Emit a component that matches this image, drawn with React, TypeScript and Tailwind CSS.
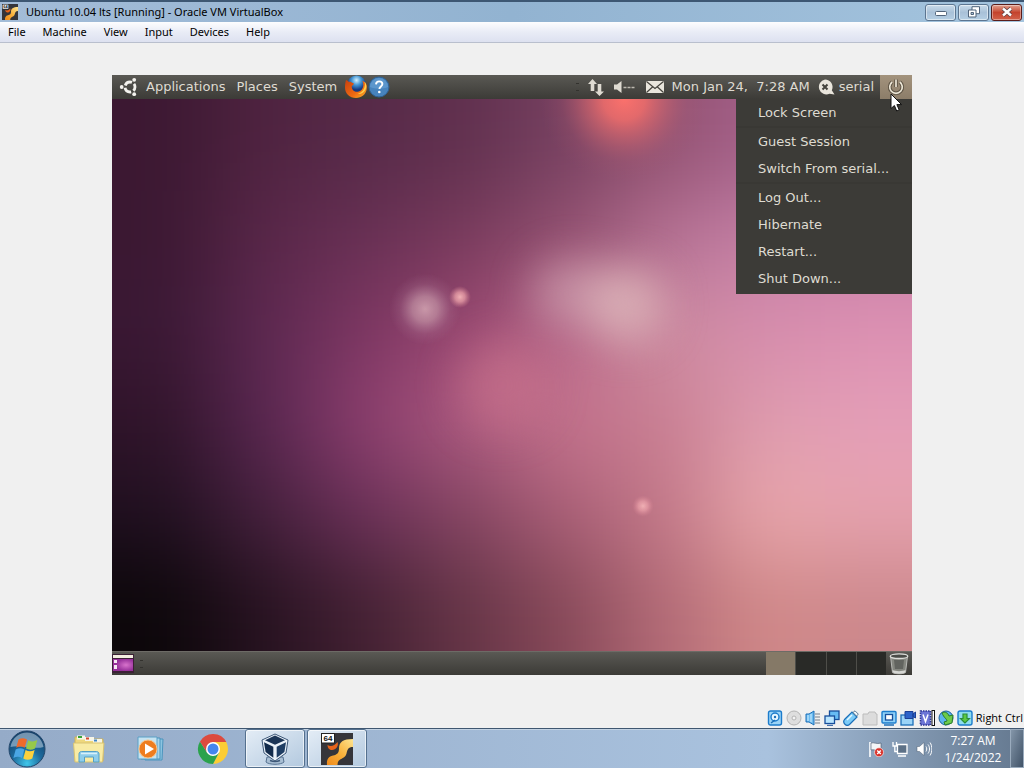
/**
 * VirtualBox window on a Windows 7 desktop, running an Ubuntu 10.04 guest
 * with the session menu open.
 */
import type { ReactNode } from "react";

/* ─────────────── Data ──────────────── */
const MENUS = ["File", "Machine", "View", "Input", "Devices", "Help"];

const SESSION_MENU: string[][] = [
    ["Lock Screen"],
    ["Guest Session", "Switch From serial..."],
    ["Log Out...", "Hibernate", "Restart...", "Shut Down..."],
];

//Wallpaper base colours, one per 100px cell, blurred together
const MESH = [
    ["#3c1832", "#4f2340", "#562a48", "#60304e", "#764060", "#925270", "#a4608a", "#b06898"],
    ["#3b1832", "#582648", "#683054", "#783a5c", "#925070", "#b47092", "#c480a6", "#c880a8"],
    ["#3a1834", "#5c2850", "#7c3662", "#984670", "#b8688a", "#cc8ca0", "#d68cac", "#dc90b2"],
    ["#30142a", "#582650", "#8c3e6e", "#ac5a80", "#c4728c", "#c87e92", "#de9cae", "#e49eb8"],
    ["#201020", "#44203c", "#6a3058", "#844462", "#a85e76", "#c27888", "#e8a6aa", "#e6a2ae"],
    ["#0c070a", "#261220", "#422032", "#643446", "#864858", "#b26a76", "#d08888", "#cc888c"],
];

/* ─────────────── Wallpaper ──────────────── */
function Wallpaper() {
    const last = MESH[0].length - 1;
    const cells: ReactNode[] = [];
    //One extra ring of cells keeps the blur from fading at the edges
    for (let r = -1; r <= MESH.length; r++) {
        for (let c = -1; c <= last + 1; c++) {
            const row = MESH[Math.min(Math.max(r, 0), MESH.length - 1)];
            cells.push(
                <rect
                    key={`${r}-${c}`}
                    x={c * 100 - (c < 0 ? 60 : 0)}
                    y={r * 92 - (r < 0 ? 60 : 0)}
                    width={c < 0 || c > last ? 161 : 101}
                    height={r < 0 || r === MESH.length ? 153 : 93}
                    fill={row[Math.min(Math.max(c, 0), last)]}
                />
            );
        }
    }
    return (
        <svg viewBox="0 0 800 552" preserveAspectRatio="none" className="block h-[552px] w-full" aria-hidden="true">
            <defs>
                <filter id="mesh" x="-170" y="-160" width="1140" height="880" filterUnits="userSpaceOnUse" colorInterpolationFilters="sRGB">
                    <feGaussianBlur stdDeviation="42" />
                </filter>
                <filter id="soft" x="-50%" y="-50%" width="200%" height="200%" colorInterpolationFilters="sRGB">
                    <feGaussianBlur stdDeviation="20" />
                </filter>
                <radialGradient id="red">
                    <stop offset="0" stopColor="#fb716c" />
                    <stop offset="0.25" stopColor="#f26e6b" stopOpacity="0.85" />
                    <stop offset="0.5" stopColor="#d8686e" stopOpacity="0.5" />
                    <stop offset="0.75" stopColor="#b85f70" stopOpacity="0.15" />
                    <stop offset="1" stopColor="#a05570" stopOpacity="0" />
                </radialGradient>
                <radialGradient id="pale">
                    <stop offset="0" stopColor="#cc9cac" stopOpacity="0.95" />
                    <stop offset="0.35" stopColor="#c494a6" stopOpacity="0.7" />
                    <stop offset="0.7" stopColor="#b884a0" stopOpacity="0.2" />
                    <stop offset="1" stopColor="#b07898" stopOpacity="0" />
                </radialGradient>
                <radialGradient id="spark">
                    <stop offset="0" stopColor="#f0b0b4" />
                    <stop offset="0.45" stopColor="#e49aa4" stopOpacity="0.8" />
                    <stop offset="1" stopColor="#d08090" stopOpacity="0" />
                </radialGradient>
            </defs>
            <g filter="url(#mesh)">{cells}</g>
            <circle cx="512" cy="0" r="84" fill="url(#red)" />
            <g filter="url(#soft)">
                <circle cx="390" cy="286" r="44" fill="#d27a90" opacity="0.45" />
                <ellipse cx="462" cy="194" rx="42" ry="34" fill="#cfa2b0" opacity="0.65" />
                <circle cx="514" cy="206" r="38" fill="#dfb8bc" opacity="0.8" />
            </g>
            <circle cx="313" cy="210" r="36" fill="url(#pale)" />
            <circle cx="348" cy="198" r="11" fill="url(#spark)" />
            <circle cx="531" cy="407" r="11" fill="url(#spark)" />
        </svg>
    );
}

/* ─────────────── Guest icons ──────────────── */
function UbuntuLogo() {
    return (
        <svg viewBox="0 0 20 20" className="size-5" aria-hidden="true">
            <circle cx="11" cy="10" r="5" fill="none" stroke="#f4f2ee" strokeWidth="2.800" strokeDasharray="8.070 2.400" strokeDashoffset="4.030" />
            <circle cx="2.700" cy="10" r="1.900" fill="#f4f2ee" />
            <circle cx="15.200" cy="2.800" r="1.900" fill="#f4f2ee" />
            <circle cx="15.200" cy="17.200" r="1.900" fill="#f4f2ee" />
        </svg>
    );
}

function FirefoxIcon() {
    return (
        <svg viewBox="0 0 24 24" className="size-6" aria-hidden="true">
            <defs>
                <radialGradient id="ffGlobe" cx="0.5" cy="0.25">
                    <stop offset="0" stopColor="#d4f0fc" />
                    <stop offset="0.5" stopColor="#4496d4" />
                    <stop offset="1" stopColor="#163a82" />
                </radialGradient>
                <linearGradient id="ffFox" x1="0" y1="0" x2="1" y2="1">
                    <stop offset="0" stopColor="#c8400f" />
                    <stop offset="0.6" stopColor="#ee6a12" />
                    <stop offset="1" stopColor="#f9b62a" />
                </linearGradient>
            </defs>
            <circle cx="12.500" cy="10" r="9.500" fill="url(#ffGlobe)" />
            <path d="M2 5c1 .2 2 1 3 2 1.200-.6 2.200-.3 3 .7 1.500.2 2 .8 1.500 1.700-.5 1-1.700 1-1.800 2.300.3 3.300 3 5.600 6.300 5 3.200-.6 5-3 5.300-6.300.1-1.800-.2-3.300-.9-4.700C22.500 7.500 23.300 10.500 22.800 13.500 22 19.500 17.500 23 12 23 5.500 23 1 18.500 1 12.500 1 10 1.400 7 2 5z" fill="url(#ffFox)" />
            <path d="M20.500 6.500c1.500 5-1 11-7 12.500 5 .5 8.500-3 8.800-7.500 0-2-.7-3.800-1.800-5z" fill="#fbd04a" />
        </svg>
    );
}

function HelpIcon() {
    return (
        <svg viewBox="0 0 22 22" className="size-[22px]" aria-hidden="true">
            <circle cx="11" cy="11" r="10" fill="#4783bd" stroke="#2f6295" />
            <path d="M2 11a9 9 0 0 1 18 0c-5 2-13 2-18 0z" fill="#6ba3d5" opacity="0.6" />
            <path d="M8 8.300c.2-2 1.500-2.900 3.200-2.900 1.900 0 3.200 1.100 3.200 2.700 0 2.400-3 2.500-3 5" fill="none" stroke="#fff" strokeWidth="1.900" />
            <circle cx="11.300" cy="16" r="1.300" fill="#fff" />
        </svg>
    );
}

function NetworkArrows() {
    return (
        <svg viewBox="0 0 18 18" className="h-[18px] w-[18px]" aria-hidden="true">
            <path d="M5.500 1 10 6H7.300v7H3.700V6H1zM12.500 18 8 13.500h2.700V6h3.600v7.500H17z" fill="#dfdbd2" />
        </svg>
    );
}

function GuestVolume() {
    return (
        <svg viewBox="0 0 22 16" className="h-4 w-[22px]" aria-hidden="true">
            <path d="M1 5.500h3L8.500 2v12L4 10.500H1z" fill="#dfdbd2" />
            <path d="M10.500 8.500h3m1 0h3m1 0h3" stroke="#bdb9b0" strokeWidth="1.300" />
        </svg>
    );
}

function Mail() {
    return (
        <svg viewBox="0 0 20 14" className="h-[14px] w-5" aria-hidden="true">
            <rect x="1" y="1" width="18" height="12" rx="1" fill="#e9e5dc" />
            <path d="m1.500 1.500 8.500 7 8.500-7M1.500 12.500 7.500 7m11 5.500L12.500 7" fill="none" stroke="#45433d" strokeWidth="1.200" />
        </svg>
    );
}

function ChatStatus() {
    return (
        <svg viewBox="0 0 18 18" className="size-[18px]" aria-hidden="true">
            <path d="M8 1.500a7.500 7.500 0 0 1 6.800 10.800l2.700 4.200-5-.8A7.500 7.500 0 1 1 8 1.500z" fill="#e9e5dc" />
            <path d="m5.500 6.500 5 5m0-5-5 5" stroke="#45433d" strokeWidth="2" />
        </svg>
    );
}

function PowerIcon() {
    return (
        <svg viewBox="0 0 18 18" className="size-[18px]" aria-hidden="true">
            <path d="M5.200 4a6.300 6.300 0 1 0 7.600 0M9 1.500V9" fill="none" stroke="#5d5344" strokeWidth="3.600" />
            <path d="M5.200 4a6.300 6.300 0 1 0 7.600 0M9 1.500V9" fill="none" stroke="#ece6d6" strokeWidth="1.700" />
        </svg>
    );
}

function Pointer() {
    return (
        <svg viewBox="0 0 13 19" className="pointer-events-none absolute top-[18px] right-[9px] z-20 h-[19px] w-[13px]" aria-hidden="true">
            <path d="M1 1v14.500l3.400-3 2.300 5.500 2.500-1.100-2.300-5.300h4.700z" fill="#fff" stroke="#111" />
        </svg>
    );
}

function ShowDesktopIcon() {
    return (
        <svg viewBox="0 0 22 19" className="h-[19px] w-[22px]" aria-hidden="true">
            <defs>
                <radialGradient id="miniDesk" cx="0.65" cy="0.5">
                    <stop offset="0" stopColor="#d873cc" />
                    <stop offset="1" stopColor="#96309a" />
                </radialGradient>
            </defs>
            <rect width="22" height="19" fill="#3b2036" />
            <rect x="1" y="1" width="20" height="3" fill="#f3efe0" />
            <rect x="1" y="5" width="20" height="12" fill="url(#miniDesk)" />
            <path d="M2 6h3v3H2zm0 5h3v4H2z" fill="#f6e8f4" />
        </svg>
    );
}

function TrashIcon() {
    return (
        <svg viewBox="0 0 20 22" className="h-[22px] w-5" aria-hidden="true">
            <path d="m1.500 3 2 16.500c2 1.700 11 1.700 13 0L18.500 3z" fill="#84867f" stroke="#b9bab6" />
            <path d="m5 7 1 9h8l1-9z" fill="#62645f" />
            <path d="M3.500 17c3 1.500 10 1.500 13 0l-.4 2.600c-2 1.400-10 1.400-12 0z" fill="#d6d7d4" />
            <ellipse cx="10" cy="3.200" rx="8.800" ry="2.300" fill="#4a4c48" stroke="#dcddd9" strokeWidth="1.300" />
        </svg>
    );
}

/* ─────────────── Host icons ──────────────── */
function VmIcon({ className }: { className: string }) {
    return (
        <svg viewBox="0 0 32 32" className={className} aria-hidden="true">
            <defs>
                <linearGradient id="solaris" x1="0" y1="1" x2="1" y2="0">
                    <stop offset="0" stopColor="#ee8a1c" />
                    <stop offset="0.5" stopColor="#f9b23c" />
                    <stop offset="1" stopColor="#fde592" />
                </linearGradient>
            </defs>
            <rect width="32" height="32" fill="#35353a" />
            <path d="M6 32c-.5-5 1-8.500 6-9.500 4-.8 6-2.500 6-7C18 9 22 6 32 6v8c-5 0-5.500 2.500-6.500 6.500-1 4-4 4.500-7 6.500-1.500 1-2 3-2 5z" fill="url(#solaris)" />
            <path d="M6.500 12c3 2 7 1 10-3 1.500 4-1.500 8-5.500 8-2.500 0-4.500-2-4.500-5z" fill="#e8641b" />
            <rect x="0.500" y="0.500" width="13" height="9.500" fill="#fff" stroke="#222" />
            <text x="7" y="8" textAnchor="middle" fontSize="8" fontWeight="700" fontFamily="Liberation Sans, sans-serif" fill="#111">64</text>
        </svg>
    );
}

function StartOrb() {
    return (
        <svg viewBox="0 0 38 38" className="size-[38px]" aria-hidden="true">
            <defs>
                <radialGradient id="orb" cx="0.5" cy="0.9" r="0.9">
                    <stop offset="0" stopColor="#3fc6ea" />
                    <stop offset="0.45" stopColor="#1d6b9d" />
                    <stop offset="1" stopColor="#123c66" />
                </radialGradient>
            </defs>
            <circle cx="19" cy="19" r="18" fill="url(#orb)" stroke="#24476b" />
            <path d="M2.500 17C4 8 11 2.500 19 2.500S34 8 35.500 17C26 20 12 14 2.500 17z" fill="#c3d6e4" opacity="0.550" />
            <path d="M10.500 9.500c3-1.800 5.500-1.700 8.500 0l-2.300 8.300c-2.900-1.600-5.200-1.700-8.500 0z" fill="#ee6a2c" />
            <path d="M20.300 10.200c3.100 1.700 5.700 1.500 9-.1l-2.300 8.300c-3.300 1.600-6 1.700-9 .1z" fill="#96c94a" />
            <path d="M7.700 19.500c3.400-1.700 5.800-1.600 8.600 0L14 27.900c-2.900-1.700-5.300-1.600-8.600 0z" fill="#4aa6e4" />
            <path d="M17.600 20.100c3 1.700 5.700 1.600 9 0l-2.300 8.400c-3.300 1.600-6 1.700-9 0z" fill="#fcd13e" />
        </svg>
    );
}

function ExplorerIcon() {
    return (
        <svg viewBox="0 0 34 30" className="h-[30px] w-[34px]" aria-hidden="true">
            <path d="M3 3h9l1.500 2H31v22H3z" fill="#eed77c" stroke="#cbb05a" />
            <path d="M5 1.500h8v4H5z" fill="#f6f5e8" />
            <path d="M6 2h4v2H6z" fill="#37a33a" />
            <path d="M13 3h9v4h-9z" fill="#f6f5e8" />
            <path d="M14 3.500h3v2h-3z" fill="#d6452c" />
            <path d="M21 5h9v4h-9z" fill="#f6f5e8" />
            <path d="M22 5.500h3v2h-3z" fill="#4086c8" />
            <path d="M1.500 9H32l-1.500 19H3z" fill="#f8eba4" stroke="#d8c373" />
            <path d="M7 28v-8c0-1.500 1-2.500 2.500-2.500h15c1.500 0 2.500 1 2.500 2.500v8h-5.500v-5h-9v5z" fill="#8ecdea" stroke="#539fc6" />
            <path d="M9 19.500h16" stroke="#d8f0fa" strokeWidth="1.500" />
        </svg>
    );
}

function MediaPlayerIcon() {
    return (
        <svg viewBox="0 0 30 28" className="h-7 w-[30px]" aria-hidden="true">
            <path d="M9 4h18l-1 21H9z" fill="#8cc4e0" stroke="#4a94bd" />
            <path d="M5 3h19v21H5z" fill="#a8d4ea" stroke="#4a94bd" />
            <path d="M2 2h19v22H2z" fill="#c5e3f1" stroke="#5ba0c6" />
            <circle cx="12" cy="14" r="9" fill="#ee7d1f" stroke="#f8c48a" />
            <path d="M9 8.500v11l9-5.500z" fill="#fff" />
        </svg>
    );
}

function ChromeIcon() {
    return (
        <svg viewBox="0 0 32 32" className="size-8" aria-hidden="true">
            <path d="M16 9h13.300A15 15 0 0 1 16 31l6-11.500z" fill="#fccd34" />
            <path d="M10 19.500 3 8.500A15 15 0 0 0 16 31l6-11.500z" fill="#2ba24c" />
            <path d="M16 9h13.300A15 15 0 0 0 3 8.500l7 11z" fill="#dd4b3e" />
            <circle cx="16" cy="16" r="7" fill="#fff" />
            <circle cx="16" cy="16" r="5.500" fill="#4486ee" />
        </svg>
    );
}

function VirtualBoxIcon() {
    return (
        <svg viewBox="0 0 32 34" className="h-[34px] w-8" aria-hidden="true">
            <path d="M8 25h16l1 5c-3 3-15 3-18 0z" fill="#a9bfd4" stroke="#54708f" />
            <path d="M11 28.500c3 1.300 7 1.300 10 0" fill="none" stroke="#3d5878" strokeWidth="1.500" />
            <path d="M16 2 29 8l-2 13-11 8-11-8L3 8z" fill="#eaf1f8" stroke="#3d5878" />
            <path d="M16 3.500 26 8.300l-10 4.500L6 8.300z" fill="#1b3556" />
            <path d="m5 10.200 9.300 4.500v11L6.600 20z" fill="#132c4c" />
            <path d="m27 10.200-9.300 4.500v11l7.700-5.700z" fill="#1e3d63" />
        </svg>
    );
}

//Status bar drawings, in the order they stand
const STATUS_ICONS: { label: string; art: ReactNode }[] = [
    {
        label: "Hard disks",
        art: (
            <>
                <rect x="1.500" y="1" width="13" height="14" rx="2" fill="#9bd4f7" stroke="#1c7ccc" strokeWidth="1.400" />
                <circle cx="8" cy="7" r="4" fill="#e6f6ff" stroke="#1c7ccc" strokeWidth="1.400" />
                <circle cx="8" cy="7" r="1.200" fill="#1c6fb8" />
                <path d="m4 13 4-3" stroke="#1c6fb8" strokeWidth="1.500" />
            </>
        ),
    },
    {
        label: "Optical drives",
        art: (
            <>
                <circle cx="8" cy="8" r="7" fill="#dedede" stroke="#b4b4b4" />
                <circle cx="8" cy="8" r="2" fill="#f4f4f4" stroke="#b4b4b4" />
            </>
        ),
    },
    {
        label: "Audio",
        art: (
            <>
                <path d="M1 4h3l5-3v14l-5-3H1z" fill="#6dbcf0" stroke="#1c6fb8" />
                <path d="M3 5v6M6 4v8" stroke="#d4effe" />
                <path d="M10 3h5v2h-5zm0 3h5v2h-5zm0 3h5v2h-5zm0 3h5v2h-5z" fill="#b3b8bd" />
            </>
        ),
    },
    {
        label: "Network",
        art: (
            <>
                <rect x="5.500" y="1" width="9.500" height="8.500" fill="#67bcf4" stroke="#174f9c" strokeWidth="1.300" />
                <rect x="1" y="6" width="9.500" height="7.500" fill="#b9e5ff" stroke="#174f9c" strokeWidth="1.300" />
                <path d="M3 15.300h6" stroke="#174f9c" />
            </>
        ),
    },
    {
        label: "USB",
        art: (
            <>
                <path d="M1.500 9.500 9 2l5 5-7.500 7.500C3.500 17-1 13 1.500 9.500z" fill="#7cccf8" stroke="#1c6fb8" strokeWidth="1.200" />
                <path d="m10 2.500 2-1.700 3.300 3.300-1.800 2z" fill="#f2f6f8" stroke="#5d7d96" />
                <path d="m4 10 5-5" stroke="#e6f8ff" strokeWidth="1.500" />
            </>
        ),
    },
    {
        label: "Shared folders",
        art: <path d="M1 4h5l1-2h6l1 2h1v11H1z" fill="#dcdcdc" stroke="#bcbcbc" />,
    },
    {
        label: "Display",
        art: (
            <>
                <rect x="1" y="1.500" width="14" height="11.500" rx="1" fill="#8fd1f8" stroke="#1c7ccc" strokeWidth="1.400" />
                <rect x="4.500" y="4.500" width="7" height="5.500" fill="#fff" stroke="#174f9c" strokeWidth="1.300" />
                <path d="M3 15h10" stroke="#1c6fb8" strokeWidth="1.500" />
            </>
        ),
    },
    {
        label: "Recording",
        art: (
            <>
                <rect x="1" y="5" width="12" height="10" fill="#9bd4f7" stroke="#1c6fb8" strokeWidth="1.300" />
                <path d="M5 1.500h8v7H5zM13 4l2.500-2v6L13 6.500z" fill="#2c62c8" stroke="#1b3f94" />
            </>
        ),
    },
    {
        label: "Features",
        art: (
            <>
                <rect x="1.500" y="1" width="10" height="14" fill="#6d76d6" stroke="#2e3795" strokeDasharray="1.500 1" strokeWidth="1.600" />
                <path d="m4 4.500 2.500 7 2.500-7" fill="none" stroke="#fff" strokeWidth="1.500" />
                <rect x="13" y="0.500" width="2.500" height="15" fill="#fff" stroke="#111" />
            </>
        ),
    },
    {
        label: "Mouse integration",
        art: (
            <>
                <circle cx="8" cy="8" r="7" fill="#5ab4ee" stroke="#1c5f9c" />
                <path d="M4 3c3-2 6 0 7 3l4-1-1 8-7 2-1-3 3-1c0-2-3-3-5-8z" fill="#6ccb4b" stroke="#2a7d2b" />
            </>
        ),
    },
    {
        label: "Keyboard capture",
        art: (
            <>
                <rect x="1" y="1" width="14" height="14" rx="2" fill="#8edcf0" stroke="#1c7ccc" strokeWidth="1.400" />
                <path d="M8 13 3.500 8.500H6V4h4v4.500h2.500z" fill="#5cc844" stroke="#2a8d3a" strokeWidth="1.200" />
            </>
        ),
    },
];

const TASKS: { label: string; icon: ReactNode; open: boolean }[] = [
    { label: "Windows Explorer", icon: <ExplorerIcon />, open: false },
    { label: "Windows Media Player", icon: <MediaPlayerIcon />, open: false },
    { label: "Google Chrome", icon: <ChromeIcon />, open: false },
    { label: "Oracle VM VirtualBox Manager", icon: <VirtualBoxIcon />, open: true },
    { label: "Ubuntu 10.04 lts", icon: <VmIcon className="size-8" />, open: true },
];

/* ─────────────── Host window ──────────────── */
function TitleBar() {
    const button = "flex h-[17px] w-[31px] items-center justify-center rounded-[3px] border border-[#5c7590] bg-linear-to-b from-[#c9dbea] via-[#a9c1d8] to-[#b5cfe4] shadow-[inset_0_0_0_1px_#ffffff80]";
    return (
        <header className="flex h-[22px] items-center border-t-2 border-[#3d5773] bg-linear-to-r from-[#a3bcd8] via-[#92b3d1] to-[#a4c4de] pr-[2px] pl-[2px]">
            <VmIcon className="size-4" />
            <h1 className="ml-2 flex-1 truncate text-[11px] leading-4 text-black">Ubuntu 10.04 lts [Running] - Oracle VM VirtualBox</h1>
            <div className="flex gap-[2px]">
                <button type="button" aria-label="Minimize" className={button}>
                    <svg viewBox="0 0 14 12" className="h-3 w-[14px]"><rect x="1.500" y="5.500" width="11" height="4" rx="1" fill="#fff" stroke="#51647a" /></svg>
                </button>
                <button type="button" aria-label="Restore" className={button}>
                    <svg viewBox="0 0 14 12" className="h-3 w-[14px]">
                        <path d="M5 .7h7.500v7H5z" fill="#fff" stroke="#51647a" />
                        <path d="M1.500 4H9v7H1.500z" fill="#fff" stroke="#51647a" />
                        <path d="M4 6.500h2.500v2H4z" fill="#a9c1d8" stroke="#51647a" />
                    </svg>
                </button>
                <button type="button" aria-label="Close" className="flex h-[17px] w-[31px] items-center justify-center rounded-[3px] border border-[#5a1d1a] bg-linear-to-b from-[#e0a08f] via-[#c4432d] to-[#d2614a] shadow-[inset_0_0_0_1px_#ffffff60]">
                    <svg viewBox="0 0 14 12" className="h-3 w-[14px]">
                        <path d="m3 2.500 8 7m0-7-8 7" stroke="#5c4347" strokeWidth="4" />
                        <path d="m3 2.500 8 7m0-7-8 7" stroke="#fff" strokeWidth="2.400" />
                    </svg>
                </button>
            </div>
        </header>
    );
}

function MenuBar() {
    return (
        <nav className="flex h-[21px] items-center gap-px border-b border-[#b9bfcd] bg-linear-to-b from-[#fdfdfe] via-[#e9ecf6] to-[#dde1f0]">
            {MENUS.map((name) => (
                <button key={name} type="button" className="px-2 text-[11px] leading-4 text-black">{name}</button>
            ))}
        </nav>
    );
}

function StatusBar() {
    return (
        <div className="flex h-5 items-center justify-end gap-[3px] pr-px font-['Open_Sans',sans-serif]">
            {STATUS_ICONS.map((icon) => (
                <button key={icon.label} type="button" aria-label={icon.label}>
                    <svg viewBox="0 0 16 16" className="block size-4">{icon.art}</svg>
                </button>
            ))}
            <span className="text-[11px] leading-4 text-black">Right Ctrl</span>
        </div>
    );
}

/* ─────────────── Guest desktop ──────────────── */
function GuestPanel() {
    return (
        <div className="flex h-6 items-center justify-between bg-linear-to-b from-[#5a5954] to-[#3c3b37] pl-[7px] whitespace-nowrap text-[#dfdbd2]">
            <div className="flex items-center">
                <UbuntuLogo />
                <nav className="mr-[7px] ml-[7px] flex gap-[11px]">
                    <button type="button">Applications</button>
                    <button type="button">Places</button>
                    <button type="button">System</button>
                </nav>
                <button type="button" aria-label="Firefox"><FirefoxIcon /></button>
                <button type="button" aria-label="Help"><HelpIcon /></button>
            </div>
            <div className="flex h-full items-center">
                <div className="mr-2 h-2 w-[3px] border-y border-[#33322e]" />
                <NetworkArrows />
                <span className="ml-2"><GuestVolume /></span>
                <span className="ml-[10px]"><Mail /></span>
                <button type="button" className="ml-[7px] whitespace-pre">Mon Jan 24,  7:28 AM</button>
                <button type="button" className="ml-[7px] flex items-center gap-1"><ChatStatus />serial</button>
                <button type="button" aria-label="Session" className="ml-[6px] flex h-full w-8 items-center justify-center bg-linear-to-b from-[#a3937d] to-[#8c7d69]">
                    <PowerIcon />
                </button>
            </div>
        </div>
    );
}

function SessionMenu() {
    return (
        <div className="absolute top-6 right-0 z-10 w-44 divide-y-2 divide-[#393834] bg-[#3c3b37] pb-[2px]">
            {SESSION_MENU.map((group) => (
                <div key={group[0]}>
                    {group.map((item) => (
                        <button key={item} type="button" className="block h-[27px] w-full pl-[22px] text-left text-[#dfdbd2]">{item}</button>
                    ))}
                </div>
            ))}
        </div>
    );
}

function GuestTaskbar() {
    return (
        <div className="flex h-6 items-center justify-between border-t border-[#6d6b66] bg-linear-to-b from-[#5a5954] to-[#3c3b37]">
            <div className="flex items-center">
                <button type="button" aria-label="Show desktop"><ShowDesktopIcon /></button>
                <div className="ml-[6px] h-2 w-[3px] border-y border-[#33322e]" />
            </div>
            <div className="flex h-full items-center">
                <div className="flex h-full w-[120px] divide-x divide-[#4e4e49] bg-[#292a27]">
                    <button type="button" aria-label="Workspace 1" className="flex-1 bg-[#857967]" />
                    <button type="button" aria-label="Workspace 2" className="flex-1" />
                    <button type="button" aria-label="Workspace 3" className="flex-1" />
                    <button type="button" aria-label="Workspace 4" className="flex-1" />
                </div>
                <button type="button" aria-label="Trash" className="mx-[3px]"><TrashIcon /></button>
            </div>
        </div>
    );
}

/* ─────────────── Host taskbar ──────────────── */
function HostTaskbar() {
    return (
        <footer className="flex h-10 items-center border-t border-[#3f5670] bg-linear-to-r from-[#95abc8] via-[#a9c2de] via-75% to-[#64788f] font-['Open_Sans',sans-serif] shadow-[inset_0_1px_0_#c3d3e4]">
            <button type="button" aria-label="Start" className="mr-[5px] flex w-[54px] justify-center"><StartOrb /></button>
            <div className="flex h-full flex-1 gap-[2px]">
                {TASKS.map((task) => (
                    <button
                        key={task.label}
                        type="button"
                        aria-label={task.label}
                        className={`flex h-full w-[60px] items-center justify-center ${task.open ? "rounded-[3px] border border-[#54708e] bg-linear-to-br from-[#e4edf6] to-[#b3c9df] shadow-[inset_0_0_0_1px_#ffffffa0]" : ""}`}
                    >
                        {task.icon}
                    </button>
                ))}
            </div>
            <div className="flex items-center gap-2">
                <svg viewBox="0 0 16 16" className="size-4" aria-hidden="true">
                    <path d="M2 1v15" stroke="#fff" strokeWidth="1.600" />
                    <path d="M3 2c3-1 5 1.500 10 0v7c-5 1.500-7-1-10 0z" fill="#f4f6f8" stroke="#45566a" strokeWidth="0.600" />
                    <circle cx="11" cy="11.300" r="4.500" fill="#d8322b" stroke="#fff" strokeWidth="0.600" />
                    <path d="m9.200 9.500 3.600 3.600m0-3.600-3.600 3.600" stroke="#fff" strokeWidth="1.400" />
                </svg>
                <svg viewBox="0 0 16 16" className="size-4" aria-hidden="true">
                    <path d="M5.500 3.500h9.500v9H5.500z" fill="#5d7187" stroke="#fff" strokeWidth="1.300" />
                    <path d="M6 15h8" stroke="#fff" strokeWidth="1.500" />
                    <path d="M1 1v4h3.500V1M2.800 5v5.500h2.500" fill="none" stroke="#fff" strokeWidth="1.300" />
                </svg>
                <svg viewBox="0 0 16 16" className="size-4" aria-hidden="true">
                    <path d="M1 5.500h2.500L8 1.500v13l-4.500-4H1z" fill="#fff" stroke="#4a5c70" strokeWidth="0.500" />
                    <path d="M10 5.500c1 1.500 1 3.500 0 5m2-7c2 2.500 2 6.500 0 9m2-11c2.500 3.500 2.500 9.500 0 13" fill="none" stroke="#fff" />
                </svg>
            </div>
            <div className="ml-1 w-[74px] text-center text-[12px] leading-[17px] text-white">
                <time className="block">7:27 AM</time>
                <time className="block">1/24/2022</time>
            </div>
            <button type="button" aria-label="Show desktop" className="h-full w-[14px] border border-[#9aabbd] bg-linear-to-br from-[#8496a9] to-[#415368]" />
        </footer>
    );
}

/* ──────────────── Render ──────────────── */
export default function App() {
    return (
        <div className="flex min-h-screen flex-col bg-[#f0f0f0] font-['Noto_Sans',sans-serif]">
            <TitleBar />
            <MenuBar />
            <main className="flex-1 pt-8">
                <div className="relative mx-auto w-full max-w-[800px] font-['DejaVu_Sans',sans-serif] text-[13px] leading-5">
                    <GuestPanel />
                    <Wallpaper />
                    <GuestTaskbar />
                    <SessionMenu />
                    <Pointer />
                </div>
            </main>
            <StatusBar />
            <HostTaskbar />
        </div>
    );
}
